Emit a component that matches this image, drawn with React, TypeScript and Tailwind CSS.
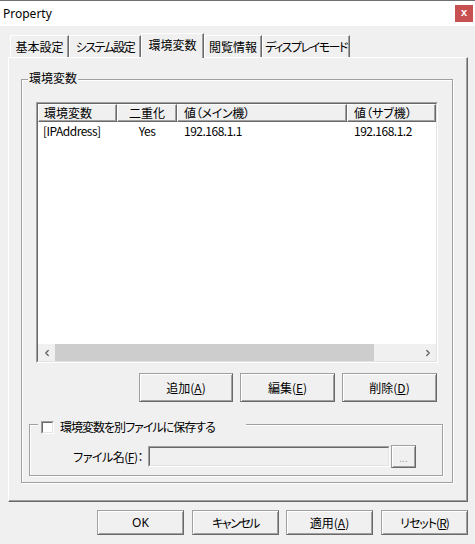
import { ChevronLeft, ChevronRight } from 'lucide-react'
import type { ReactNode } from 'react'

const JP = "font-['Noto_Sans_CJK_JP',sans-serif] [font-feature-settings:'palt']"

// kana-heavy labels get tightened so they sit in the same width as the original UI font
const TABS = [
  { label: '基本設定', w: 'w-[59px]', tr: '' },
  { label: 'システム設定', w: 'w-[72px]', tr: 'tracking-[-1.5px]' },
  { label: '環境変数', w: 'w-[63px]', tr: '', active: true },
  { label: '閲覧情報', w: 'w-[58px]', tr: '' },
  { label: 'ディスプレイモード', w: 'w-[88px]', tr: 'tracking-[-1.5px]' },
]

function Btn({ children, className = '' }: { children: ReactNode; className?: string }) {
  return (
    <div className={`flex items-center justify-center bg-[#f0f0f0] border border-t-[#a0a0a0] border-l-[#a0a0a0] border-b-[#696969] border-r-[#696969] shadow-[inset_1px_1px_0_#fff,inset_-1px_-1px_0_#a0a0a0] whitespace-nowrap ${className}`}>
      {children}
    </div>
  )
}

// etched frame used by both group boxes
const ETCHED = 'relative border border-[#a0a0a0] shadow-[1px_1px_0_#fff,inset_1px_1px_0_#fff]'

export default function App() {
  return (
    <div className={`w-[475px] h-[544px] bg-[#f0f0f0] flex flex-col overflow-hidden text-[12px] text-black ${JP}`}>
      {/* title bar */}
      <div className="h-[26px] bg-white border-t border-[#707070] flex items-start justify-between pl-[3px]">
        <span className="font-['Noto_Sans',sans-serif] leading-[25px]">Property</span>
        <div className="mt-[4px] mr-[2px] w-[18px] h-[17px] bg-[#c75050] text-white text-[11px] font-bold font-['Liberation_Sans',sans-serif] flex items-center justify-center leading-none pb-[2px]">x</div>
      </div>

      {/* tabs */}
      <div className="mt-[7px] h-[24px] flex items-end pl-[10px] relative z-10">
        {TABS.map(t => (
          <div
            key={t.label}
            className={`${t.w} ${t.tr} flex justify-center overflow-hidden bg-[#f0f0f0] border-t border-l border-white border-r border-r-[#696969] shadow-[inset_-1px_0_0_#a0a0a0] whitespace-nowrap leading-[16px] ${t.active ? 'h-[25px] -mb-[1px] pt-[3px]' : 'h-[22px] pt-[3px]'}`}
          >
            {t.label}
          </div>
        ))}
      </div>

      {/* tab panel */}
      <div className="ml-[8px] w-[460px] h-[445px] border border-t-white border-l-white border-b-[#696969] border-r-[#696969] shadow-[inset_-1px_-1px_0_#a0a0a0] pt-[21px] pl-[12px]">
        <div className={`${ETCHED} w-[432px] h-[404px] pt-[22px]`}>
          <div className="absolute left-[6px] -top-[10px] px-[1px] bg-[#f0f0f0] leading-[16px]">環境変数</div>

          {/* list view */}
          <div className="ml-[14px] w-[402px] h-[261px] border border-t-[#a0a0a0] border-l-[#a0a0a0] border-b-white border-r-white">
            <div className="h-full border border-t-[#696969] border-l-[#696969] border-b-[#e3e3e3] border-r-[#e3e3e3] bg-white flex flex-col">
              <div className="h-[18px] flex bg-[#f0f0f0] leading-[16px] whitespace-nowrap">
                {[
                  { t: '環境変数', c: 'w-[79px] pl-[5px]' },
                  { t: '二重化', c: 'w-[60px] justify-center' },
                  { t: '値（メイン機）', c: 'w-[170px] pl-[6px] tracking-[-0.3px]' },
                  { t: '値（サブ機）', c: 'flex-1 pl-[6px]' },
                ].map(h => (
                  <div key={h.t} className={`${h.c} flex border border-t-white border-l-white border-b-[#696969] border-r-[#696969] shadow-[inset_-1px_-1px_0_#a0a0a0]`}>
                    {h.t}
                  </div>
                ))}
              </div>
              <div className="h-[17px] flex items-center leading-[17px] whitespace-nowrap tracking-[-0.5px]">
                <div className="w-[79px] pl-[5px]">[IPAddress]</div>
                <div className="w-[60px] text-center">Yes</div>
                <div className="w-[170px] pl-[7px]">192.168.1.1</div>
                <div className="flex-1 pl-[7px]">192.168.1.2</div>
              </div>
              <div className="flex-1" />
              {/* horizontal scrollbar */}
              <div className="h-[17px] flex bg-[#f0f0f0]">
                <div className="w-[17px] flex items-center justify-center text-[#606060]">
                  <ChevronLeft size={10} strokeWidth={3} />
                </div>
                <div className="w-[319px] bg-[#cdcdcd]" />
                <div className="flex-1" />
                <div className="w-[17px] flex items-center justify-center text-[#606060]">
                  <ChevronRight size={10} strokeWidth={3} />
                </div>
              </div>
            </div>
          </div>

          {/* list buttons */}
          <div className="ml-[14px] mt-[10px] w-[401px] flex justify-end gap-[7px]">
            <Btn className="w-[94px] h-[29px]">追加(<u>A</u>)</Btn>
            <Btn className="w-[95px] h-[29px]">編集(<u>E</u>)</Btn>
            <Btn className="w-[95px] h-[29px]">削除(<u>D</u>)</Btn>
          </div>

          {/* save-to-file group */}
          <div className={`${ETCHED} ml-[7px] mt-[22px] w-[414px] h-[52px] pt-[20px]`}>
            <div className="absolute left-[8px] -top-[6px] w-[208px] h-[16px] px-[3px] bg-[#f0f0f0] flex items-center leading-[16px] whitespace-nowrap">
              <div className="w-[13px] h-[13px] border border-t-[#a0a0a0] border-l-[#a0a0a0] border-b-white border-r-white">
                <div className="h-full bg-white border border-t-[#696969] border-l-[#696969] border-b-[#e3e3e3] border-r-[#e3e3e3]" />
              </div>
              <span className="ml-[6px] tracking-[-1px]">環境変数を別ファイルに保存する</span>
            </div>
            <div className="flex items-center h-[23px]">
              <div className="w-[118px] text-right pr-[5px] whitespace-nowrap tracking-[-0.5px]">ファイル名(<u>F</u>)：</div>
              <div className="w-[242px] h-[21px] border border-t-[#a0a0a0] border-l-[#a0a0a0] border-b-white border-r-white">
                <div className="h-full bg-[#f0f0f0] border border-t-[#696969] border-l-[#696969] border-b-[#e3e3e3] border-r-[#e3e3e3]" />
              </div>
              <Btn className="ml-[1px] w-[25px] h-[23px] text-[#a0a0a0] text-[10px] leading-none pt-[3px]">...</Btn>
            </div>
          </div>
        </div>
      </div>

      {/* dialog buttons */}
      <div className="mt-[8px] ml-[97px] flex">
        <Btn className="w-[87px] h-[25px] font-['Noto_Sans',sans-serif]">OK</Btn>
        <Btn className="ml-[8px] w-[87px] h-[25px] tracking-[-1.5px]">キャンセル</Btn>
        <Btn className="ml-[7px] w-[87px] h-[25px]">適用(<u>A</u>)</Btn>
        <Btn className="ml-[8px] w-[87px] h-[25px] tracking-[-1px]">リセット(<u>R</u>)</Btn>
      </div>
    </div>
  )
}
